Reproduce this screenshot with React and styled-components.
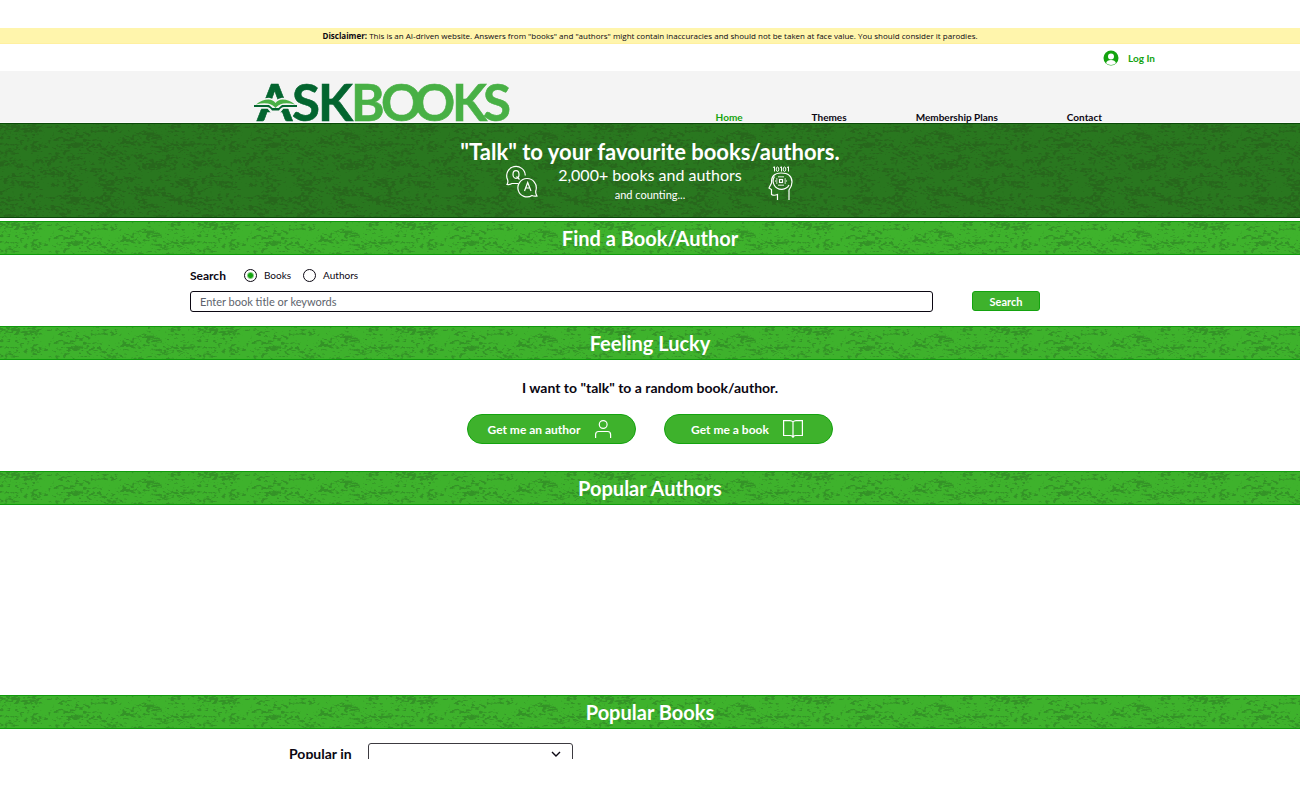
import React, { useId } from "react";
import styled, { createGlobalStyle } from "styled-components";

const GlobalStyle = createGlobalStyle`
  *, *::before, *::after { box-sizing: border-box; }
  body {
    margin: 0;
    background: #ffffff;
    color: #0b0712;
    font-family: Lato, "Open Sans", sans-serif;
  }
  h1, h2, p { margin: 0; }
  button, input, select { font-family: inherit; }
`;

const Page = styled.div`
  padding-top: 28px;
`;

const Disclaimer = styled.p`
  padding: 1px 16px 0;
  background: #fff5ac;
  border-bottom: 1px solid #fff0a0;
  font-family: "Open Sans", sans-serif;
  font-size: 8px;
  line-height: 14px;
  text-align: center;
`;

const TopBar = styled.div`
  display: flex;
  justify-content: flex-end;
  align-items: center;
  max-width: 1010px;
  height: 27px;
  margin: 0 auto;
`;

const LoginButton = styled.button`
  display: flex;
  align-items: center;
  gap: 9px;
  padding: 0;
  border: 0;
  background: none;
  color: #14a30f;
  font-size: 10px;
  font-weight: 700;
  line-height: 16px;
  cursor: pointer;
`;

const Header = styled.header`
  position: relative;
  z-index: 1;
  background: #f4f4f4;
  border-bottom: 1px solid #fbfbfb;
`;

const HeaderInner = styled.div`
  display: flex;
  justify-content: space-between;
  align-items: flex-end;
  max-width: 904px;
  height: 51px;
  margin: 0 auto;
  padding-left: 54px;
`;

const LogoMark = styled.svg`
  overflow: visible;
`;

const Nav = styled.nav`
  display: flex;
  gap: 69px;
`;

const NavLink = styled.a`
  color: ${(p) => (p.$active ? "#14a30f" : "#0b0712")};
  font-size: 10px;
  font-weight: 700;
  line-height: 9px;
  text-decoration: none;
`;

const Textured = styled.div`
  position: relative;
  overflow: hidden;
  background: ${(p) => (p.$dark ? "#29771f" : "#3eb22c")};
  border: solid ${(p) => (p.$dark ? "#0a4a08" : "#109a0c")};
  border-width: 1px 0;
  color: #ffffff;
  text-align: center;
`;

const Grain = styled.svg`
  position: absolute;
  inset: 0;
  width: 100%;
  height: 100%;
`;

const HeroContent = styled.div`
  position: relative;
  display: flex;
  flex-direction: column;
  align-items: center;
  padding: 14px 0;
`;

const HeroTitle = styled.h1`
  font-size: 22px;
  font-weight: 700;
  line-height: 27px;
`;

const HeroRow = styled.div`
  display: grid;
  grid-template-columns: 32px 224px 32px;
  height: 38px;
`;

const HeroLead = styled.p`
  font-size: 16px;
  font-weight: 400;
  line-height: 20px;
`;

const HeroNote = styled.p`
  font-size: 11px;
  line-height: 20px;
`;

const BandTitle = styled.h2`
  position: relative;
  font-size: 20px;
  font-weight: 700;
  line-height: 32px;
`;

const Gap = styled.div`
  height: 3px;
`;

const SearchForm = styled.form`
  max-width: 920px;
  margin: 0 auto;
  padding: 12px 70px 14px 0;
`;

const Choices = styled.div`
  display: flex;
  align-items: center;
  height: 16px;
  margin-bottom: 8px;
`;

const ChoicesLabel = styled.span`
  margin-right: 18px;
  font-size: 12px;
  font-weight: 700;
`;

const Choice = styled.label`
  display: flex;
  align-items: center;
  gap: 7px;
  margin-right: 12px;
  font-size: 10px;
  line-height: 16px;
`;

const Radio = styled.input`
  appearance: none;
  width: 13px;
  height: 13px;
  margin: 0;
  border: 1px solid #0b0712;
  border-radius: 50%;
  &:checked {
    background: radial-gradient(circle, #14a30f 2px, transparent 4px);
  }
`;

const SearchRow = styled.div`
  display: flex;
  gap: 39px;
`;

const SearchInput = styled.input`
  flex: 1;
  min-width: 0;
  height: 21px;
  padding: 0 9px;
  border: 1px solid #0b0712;
  border-radius: 3px;
  outline: 0;
  font-size: 11px;
  &::placeholder { color: #5d636c; opacity: 1; }
`;

const SearchButton = styled.button`
  width: 68px;
  height: 20px;
  padding: 0;
  border: 1px solid #14a30f;
  border-radius: 3px;
  background: #3eb22c;
  color: #ffffff;
  font-size: 11px;
  font-weight: 700;
  cursor: pointer;
`;

const Lucky = styled.section`
  display: flex;
  flex-direction: column;
  align-items: center;
  gap: 16px;
  padding: 18px 0 27px;
`;

const LuckyText = styled.p`
  font-size: 14px;
  font-weight: 700;
  line-height: 20px;
`;

const LuckyButtons = styled.div`
  display: flex;
  gap: 28px;
`;

const PillButton = styled.button`
  display: flex;
  align-items: center;
  justify-content: center;
  gap: 13px;
  width: 169px;
  height: 30px;
  padding: 0 2px 0 0;
  border: 1px solid #14a30f;
  border-radius: 15px;
  background: #3eb22c;
  color: #ffffff;
  font-size: 12px;
  font-weight: 700;
  cursor: pointer;
`;

const AuthorsList = styled.section`
  height: 190px;
`;

const PopularBooks = styled.section`
  height: 30px;
  overflow: hidden;
`;

const PopularRow = styled.div`
  display: flex;
  align-items: center;
  gap: 16px;
  max-width: 722px;
  margin: 0 auto;
  padding-top: 14px;
`;

const PopularLabel = styled.label`
  font-size: 14px;
  font-weight: 700;
  line-height: 20px;
`;

const SelectBox = styled.div`
  display: grid;
  align-items: center;
  width: 205px;
  & > * { grid-area: 1 / 1; }
  & > svg { justify-self: end; margin-right: 12px; pointer-events: none; }
`;

const Select = styled.select`
  appearance: none;
  width: 100%;
  height: 21px;
  border: 1px solid #3c3a40;
  border-radius: 3px;
  background: #ffffff;
`;

function Texture({ dark }) {
  const id = useId();
  const tile = { x: 0, y: 0, width: 198, height: 100 };
  return (
    <Grain aria-hidden="true">
      <filter id={id} filterUnits="userSpaceOnUse" x="0" y="0" width="100%" height="100%" colorInterpolationFilters="sRGB">
        <feTurbulence {...tile} type="fractalNoise" baseFrequency="0.05 0.11" numOctaves="4" seed="8" stitchTiles="stitch" />
        <feColorMatrix {...tile} values="0 0 0 0 0  0 0 0 0 0  0 0 0 0 0  1 0 0 0 0" result="coarse" />
        <feTurbulence {...tile} type="fractalNoise" baseFrequency="0.25 0.45" numOctaves="2" seed="3" stitchTiles="stitch" />
        <feColorMatrix {...tile} values="0 0 0 0 0  0 0 0 0 0  0 0 0 0 0  1 0 0 0 0" result="fine" />
        <feComposite {...tile} in="coarse" in2="fine" operator="arithmetic" k1="0" k2="5" k3="6" k4={dark ? -5.6 : -5.8} />
        <feColorMatrix
          {...tile}
          values={`0 0 0 0 ${dark ? 0.15 : 0.18}  0 0 0 0 ${dark ? 0.33 : 0.5}  0 0 0 0 ${dark ? 0.1 : 0.14}  0 0 0 1 0`}
        />
        <feTile x="0" y="0" width="100%" height="100%" />
      </filter>
      <rect width="100%" height="100%" filter={`url(#${id})`} opacity={dark ? 0.45 : 0.6} />
    </Grain>
  );
}

function Band({ children }) {
  return (
    <Textured>
      <Texture />
      <BandTitle>{children}</BandTitle>
    </Textured>
  );
}

function Logo() {
  return (
    <LogoMark width="260" height="44" viewBox="0 0 260 44" role="img" aria-label="AskBooks">
      <g fontFamily="Lato, sans-serif" fontWeight="700" fontSize="51" strokeWidth="0.600">
        <text y="43" x="5 40 66" fill="#03652f" stroke="#03652f">ASK</text>
        <text y="43" x="99 129 162 200 231" fill="#48b045" stroke="#48b045">BOOKS</text>
      </g>
      <path d="M4 27Q9 21 17 20.500Q21 21 23.500 24Q26 21 30 20.500Q38 21 43 27L45 30H31L27 35H20L16 30H2Z" fill="#f4f4f4" stroke="#f4f4f4" strokeWidth="1.500" />
      <path d="M2 27H17L20.500 30H26.500L30 27H45V29H32Q29 29 27 32.500H20Q18 29 15 29H2Z" fill="#03652f" />
      <path d="M4 26.500Q10 21.500 16.500 21.500Q21 21.500 23.500 25Q26 21.500 30.500 21.500Q37 21.500 43 26.500Q36 24.500 31 25.500Q26 26.500 23.500 30Q21 26.500 16 25.500Q11 24.500 4 26.500Z" fill="#48b045" />
    </LogoMark>
  );
}

function AvatarIcon() {
  return (
    <svg width="16" height="16" viewBox="0 0 16 16" aria-hidden="true">
      <circle cx="8" cy="8" r="7.500" fill="#14a30f" />
      <circle cx="8" cy="6.500" r="3" fill="#ffffff" />
      <path d="M3 13.200Q4 10 8 10T13 13.200Q11 15 8 15T3 13.200Z" fill="#ffffff" />
    </svg>
  );
}

function QaIcon() {
  return (
    <svg width="32" height="34" viewBox="0 0 32 34" fill="none" stroke="#ffffff" strokeWidth="1.200" aria-hidden="true">
      <path d="M12.500 18.500H6Q3 20 1 19.500Q2.500 17 1.500 14.500A9.300 9.300 0 1 1 19.300 10.500" />
      <path d="M30 25Q29 28 31 31Q28 31.500 26 30.500A9.200 9.200 0 1 1 30 25Z" />
      <ellipse cx="10" cy="9.500" rx="3" ry="3.800" />
      <path d="M10.500 11.500L13.500 14.500M18.500 26L21.700 17.500L25 26M19.500 23H24" />
    </svg>
  );
}

function MindIcon() {
  return (
    <svg width="32" height="38" viewBox="0 0 32 38" fill="none" stroke="#ffffff" strokeWidth="1.200" aria-hidden="true">
      <g transform="translate(4 1)" strokeWidth="1">
        <path d="M7 1.500L8.500 0.800V5.500M14 1.500L15.500 0.800V5.500M21 1.500L22.500 0.800V5.500" />
        <ellipse cx="11.500" cy="3.200" rx="1.300" ry="2.200" />
        <ellipse cx="18.500" cy="3.200" rx="1.300" ry="2.200" />
      </g>
      <path d="M15.500 35V29.500Q12 31 9.500 29.500V24.500L7 23L9.500 18Q9 8 19 8Q30 8 30 17Q30 21 27 25V35" />
      <path d="M12.500 11.500A8.300 8.300 0 0 0 20 24.300Q25 24 27 20" />
      <rect x="17.500" y="14.500" width="3" height="3" />
      <path d="M17 11V12.500M19 11V12.500M21 11V12.500M17 19.500V21M19 19.500V21M21 19.500V21M14 14H15.500M13 16H15.500M14 18H15.500M22.500 14H24M22.500 16H25M22.500 18H24" />
    </svg>
  );
}

function PersonIcon() {
  return (
    <svg width="20" height="20" viewBox="0 0 20 20" fill="none" stroke="#ffffff" strokeWidth="1.200" aria-hidden="true">
      <circle cx="10.200" cy="5.500" r="3.900" />
      <path d="M2.600 19V15.500Q2.600 12.500 5.600 12.500H14.600Q17.600 12.500 17.600 15.500V19" />
    </svg>
  );
}

function BookIcon() {
  return (
    <svg width="22" height="20" viewBox="0 0 22 20" fill="none" stroke="#ffffff" strokeWidth="1.200" aria-hidden="true">
      <path d="M11 3Q10 1.600 8 1.600H1.600V16.500H8.500Q10.500 16.500 11 18.500Q11.500 16.500 13.500 16.500H20.400V1.600H14Q12 1.600 11 3V18.500" />
    </svg>
  );
}

export default function App() {
  return (
    <>
      <GlobalStyle />
      <Page>
        <Disclaimer>
          <strong>Disclaimer:</strong> This is an AI-driven website. Answers from "books" and "authors" might contain
          inaccuracies and should not be taken at face value. You should consider it parodies.
        </Disclaimer>
        <TopBar>
          <LoginButton type="button">
            <AvatarIcon />
            Log In
          </LoginButton>
        </TopBar>
        <Header>
          <HeaderInner>
            <Logo />
            <Nav>
              <NavLink href="#home" $active>Home</NavLink>
              <NavLink href="#themes">Themes</NavLink>
              <NavLink href="#plans">Membership Plans</NavLink>
              <NavLink href="#contact">Contact</NavLink>
            </Nav>
          </HeaderInner>
        </Header>
        <main>
          <Textured $dark>
            <Texture dark />
            <HeroContent>
              <HeroTitle>"Talk" to your favourite books/authors.</HeroTitle>
              <HeroRow>
                <QaIcon />
                <div>
                  <HeroLead>2,000+ books and authors</HeroLead>
                  <HeroNote>and counting...</HeroNote>
                </div>
                <MindIcon />
              </HeroRow>
            </HeroContent>
          </Textured>
          <Gap />
          <Band>Find a Book/Author</Band>
          <SearchForm onSubmit={(e) => e.preventDefault()}>
            <Choices role="radiogroup" aria-labelledby="search-kind">
              <ChoicesLabel id="search-kind">Search</ChoicesLabel>
              <Choice>
                <Radio type="radio" name="kind" defaultChecked />
                Books
              </Choice>
              <Choice>
                <Radio type="radio" name="kind" />
                Authors
              </Choice>
            </Choices>
            <SearchRow>
              <SearchInput type="text" aria-label="Search" placeholder="Enter book title or keywords" />
              <SearchButton type="submit">Search</SearchButton>
            </SearchRow>
          </SearchForm>
          <Band>Feeling Lucky</Band>
          <Lucky>
            <LuckyText>I want to "talk" to a random book/author.</LuckyText>
            <LuckyButtons>
              <PillButton type="button">
                Get me an author
                <PersonIcon />
              </PillButton>
              <PillButton type="button">
                Get me a book
                <BookIcon />
              </PillButton>
            </LuckyButtons>
          </Lucky>
          <Band>Popular Authors</Band>
          <AuthorsList />
          <Band>Popular Books</Band>
          <PopularBooks>
            <PopularRow>
              <PopularLabel htmlFor="popular-in">Popular in</PopularLabel>
              <SelectBox>
                <Select id="popular-in" />
                <svg width="10" height="6" viewBox="0 0 10 6" fill="none" stroke="#0b0712" strokeWidth="1.400" aria-hidden="true">
                  <path d="M1 1L5 5L9 1" />
                </svg>
              </SelectBox>
            </PopularRow>
          </PopularBooks>
        </main>
      </Page>
    </>
  );
}
